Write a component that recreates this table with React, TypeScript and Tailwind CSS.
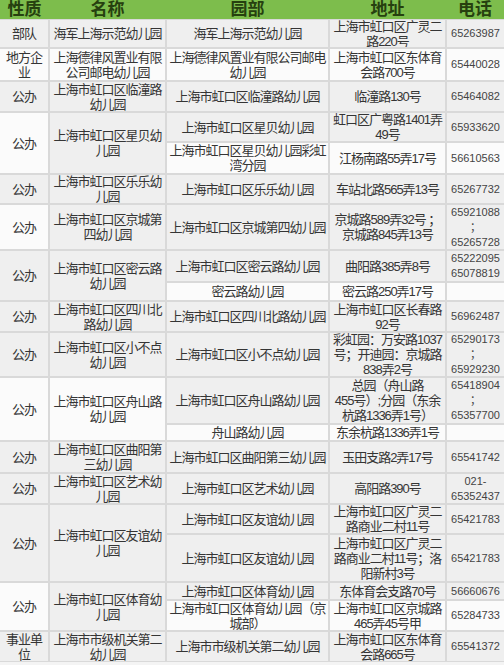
import { Fragment } from "react";

type Cell = { l: string[]; rs?: boolean; w?: boolean };
type Row = { a?: Cell; b?: Cell; c: Cell; d: Cell; e: Cell };

// 虹口区幼儿园一览
const rows: Row[] = [
  {
    a: { l: ["部队"] },
    b: { l: ["海军上海示范幼儿园"] },
    c: { l: ["海军上海示范幼儿园"] },
    d: { l: ["上海市虹口区广灵二", "路220号"] },
    e: { l: ["65263987"] },
  },
  {
    a: { l: ["地方企", "业"], w: true },
    b: { l: ["上海德律风置业有限", "公司邮电幼儿园"], w: true },
    c: { l: ["上海德律风置业有限公司邮电", "幼儿园"], w: true },
    d: { l: ["上海市虹口区东体育", "会路700号"], w: true },
    e: { l: ["65440028"], w: true },
  },
  {
    a: { l: ["公办"] },
    b: { l: ["上海市虹口区临潼路", "幼儿园"] },
    c: { l: ["上海市虹口区临潼路幼儿园"] },
    d: { l: ["临潼路130号"] },
    e: { l: ["65464082"] },
  },
  {
    a: { l: ["公办"], rs: true, w: true },
    b: { l: ["上海市虹口区星贝幼", "儿园"], rs: true },
    c: { l: ["上海市虹口区星贝幼儿园"] },
    d: { l: ["虹口区广粤路1401弄", "49号"] },
    e: { l: ["65933620"] },
  },
  {
    c: { l: ["上海市虹口区星贝幼儿园彩虹", "湾分园"], w: true },
    d: { l: ["江杨南路55弄17号"], w: true },
    e: { l: ["56610563"], w: true },
  },
  {
    a: { l: ["公办"] },
    b: { l: ["上海市虹口区乐乐幼", "儿园"] },
    c: { l: ["上海市虹口区乐乐幼儿园"] },
    d: { l: ["车站北路565弄13号"] },
    e: { l: ["65267732"] },
  },
  {
    a: { l: ["公办"], w: true },
    b: { l: ["上海市虹口区京城第", "四幼儿园"] },
    c: { l: ["上海市虹口区京城第四幼儿园"] },
    d: { l: ["京城路589弄32号 ；", "京城路845弄13号"] },
    e: { l: ["65921088", "；", "65265728"] },
  },
  {
    a: { l: ["公办"], rs: true },
    b: { l: ["上海市虹口区密云路", "幼儿园"], rs: true },
    c: { l: ["上海市虹口区密云路幼儿园"] },
    d: { l: ["曲阳路385弄8号"] },
    e: { l: ["65222095", "65078819"] },
  },
  {
    c: { l: ["密云路幼儿园"], w: true },
    d: { l: ["密云路250弄17号"], w: true },
    e: { l: [""], w: true },
  },
  {
    a: { l: ["公办"] },
    b: { l: ["上海市虹口区四川北", "路幼儿园"] },
    c: { l: ["上海市虹口区四川北路幼儿园"] },
    d: { l: ["上海市虹口区长春路", "92号"] },
    e: { l: ["56962487"] },
  },
  {
    a: { l: ["公办"] },
    b: { l: ["上海市虹口区小不点", "幼儿园"] },
    c: { l: ["上海市虹口区小不点幼儿园"] },
    d: { l: ["彩虹园：万安路1037", "号；开迪园：京城路", "838弄2号"] },
    e: { l: ["65290173", "；", "65929230"] },
  },
  {
    a: { l: ["公办"], rs: true, w: true },
    b: { l: ["上海市虹口区舟山路", "幼儿园"], rs: true, w: true },
    c: { l: ["上海市虹口区舟山路幼儿园"] },
    d: { l: ["总园（舟山路", "455号）;分园（东余", "杭路1336弄1号）"] },
    e: { l: ["65418904", "；", "65357700"] },
  },
  {
    c: { l: ["舟山路幼儿园"], w: true },
    d: { l: ["东余杭路1336弄1号"], w: true },
    e: { l: [""], w: true },
  },
  {
    a: { l: ["公办"] },
    b: { l: ["上海市虹口区曲阳第", "三幼儿园"] },
    c: { l: ["上海市虹口区曲阳第三幼儿园"] },
    d: { l: ["玉田支路2弄17号"] },
    e: { l: ["65541742"] },
  },
  {
    a: { l: ["公办"] },
    b: { l: ["上海市虹口区艺术幼", "儿园"] },
    c: { l: ["上海市虹口区艺术幼儿园"] },
    d: { l: ["高阳路390号"] },
    e: { l: ["021-", "65352437"] },
  },
  {
    a: { l: ["公办"], rs: true },
    b: { l: ["上海市虹口区友谊幼", "儿园"], rs: true },
    c: { l: ["上海市虹口区友谊幼儿园"] },
    d: { l: ["上海市虹口区广灵二", "路商业二村11号"] },
    e: { l: ["65421783"] },
  },
  {
    c: { l: ["上海市虹口区友谊幼儿园"] },
    d: { l: ["上海市虹口区广灵二", "路商业二村11号；洛", "阳新村3号"] },
    e: { l: ["65421783"] },
  },
  {
    a: { l: ["公办"], rs: true, w: true },
    b: { l: ["上海市虹口区体育幼", "儿园"], rs: true },
    c: { l: ["上海市虹口区体育幼儿园"] },
    d: { l: ["东体育会支路70号"] },
    e: { l: ["56660676"] },
  },
  {
    c: { l: ["上海市虹口区体育幼儿园（京", "城部）"], w: true },
    d: { l: ["上海市虹口区京城路", "465弄45号甲"], w: true },
    e: { l: ["65284733"], w: true },
  },
  {
    a: { l: ["事业单", "位"] },
    b: { l: ["上海市市级机关第二", "幼儿园"] },
    c: { l: ["上海市市级机关第二幼儿园"] },
    d: { l: ["上海市虹口区东体育", "会路665号"] },
    e: { l: ["65541372"] },
  },
];

const font = { fontFamily: '"Liberation Sans", "Noto Sans CJK SC", sans-serif' };

function Box({ cell, phone }: { cell: Cell; phone?: boolean }) {
  return (
    <div
      className={`flex flex-col items-center justify-center overflow-hidden whitespace-nowrap text-center ${
        cell.rs ? "row-span-2" : ""
      } ${cell.w ? "bg-[#fbfbfb]" : "bg-[#efefef]"} ${
        phone
          ? "text-[11px] leading-[15px] text-[#444]"
          : "text-[13px] leading-[15px] tracking-[-1px] text-[#353535]"
      }`}
    >
      {cell.l.map((line, i) => (
        <div key={i}>{line}</div>
      ))}
    </div>
  );
}

export default function App() {
  const heads = ["性质", "名称", "园部", "地址", "电话"];
  return (
    <div className="w-[504px] h-[665px] overflow-hidden bg-[#f4f4f4]" style={font}>
      <div className="grid grid-cols-[48px_115px_161px_115px_57px] grid-rows-[18px_27px_31px_29px_28px_30px_28px_44px_30px_17px_29px_43px_45px_15px_30px_29px_28px_46px_16px_29px_29px] gap-[2px] bg-[#d9d9d9] pb-[1px]">
        {/* header */}
        <div className="col-span-5 grid grid-cols-[49px_117px_163px_117px_58px] bg-[#7dbd4c] -mb-[1px]">
          {heads.map((h) => (
            <div
              key={h}
              className="flex items-center justify-center overflow-hidden text-[17px] leading-[17px] font-bold text-[#26400f]"
            >
              {h}
            </div>
          ))}
        </div>
        {rows.map((r, i) => (
          <Fragment key={i}>
            {r.a && <Box cell={r.a} />}
            {r.b && <Box cell={r.b} />}
            <Box cell={r.c} />
            <Box cell={r.d} />
            <Box cell={r.e} phone />
          </Fragment>
        ))}
      </div>
    </div>
  );
}
